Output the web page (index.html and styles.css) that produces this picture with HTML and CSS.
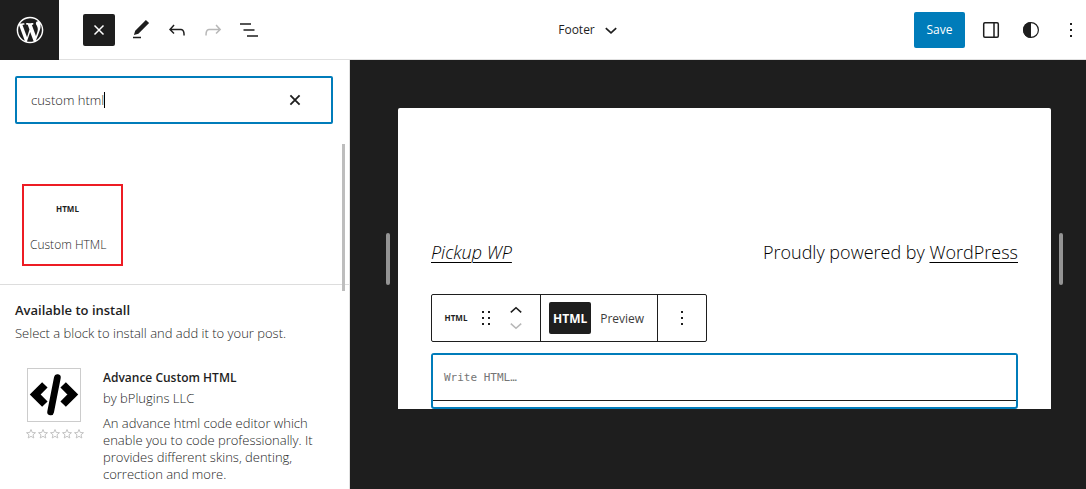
FILE: index.html
```html
<!DOCTYPE html>
<html lang="en">
<head>
<meta charset="UTF-8">
<meta name="viewport" content="width=device-width, initial-scale=1.0">
<title>Footer - Site Editor</title>
<link rel="stylesheet" href="styles.css">
</head>
<body>
    <!-- Top bar -->
    <header class="header">
        <a href="#" class="site-logo" aria-label="Go back to the dashboard">
            <svg width="32" height="32" viewBox="-2 -2 24 24" fill="currentColor"><path d="M20 10c0-5.51-4.49-10-10-10C4.48 0 0 4.49 0 10c0 5.52 4.48 10 10 10 5.51 0 10-4.48 10-10zM7.78 15.37L4.37 6.22c.55-.02 1.17-.08 1.17-.08.5-.06.44-1.13-.06-1.11 0 0-1.45.11-2.37.11-.18 0-.37 0-.58-.01C4.12 2.69 6.87 1.11 10 1.11c2.33 0 4.45.87 6.05 2.34-.68-.11-1.65.39-1.65 1.58 0 .74.45 1.36.9 2.1.35.61.55 1.36.55 2.46 0 1.49-1.4 5-1.4 5l-3.03-8.37c.54-.02.82-.17.82-.17.5-.05.44-1.25-.06-1.22 0 0-1.44.12-2.38.12-.87 0-2.33-.12-2.33-.12-.5-.03-.56 1.2-.06 1.22l.92.08 1.26 3.41zM17.41 10c.24-.64.74-1.87.43-4.25.7 1.29 1.05 2.71 1.05 4.25 0 3.29-1.73 6.24-4.4 7.78.97-2.59 1.94-5.2 2.92-7.78zM6.1 18.09C3.12 16.65 1.11 13.53 1.11 10c0-1.3.23-2.48.72-3.59C3.25 10.3 4.67 14.2 6.1 18.09zm4.03-6.63l2.58 6.98c-.86.29-1.76.45-2.71.45-.79 0-1.57-.11-2.29-.33.81-2.38 1.62-4.74 2.42-7.1z"/></svg>
        </a>
        <div class="header-tools">
            <button type="button" class="inserter-toggle" aria-label="Toggle block inserter">
                <svg width="24" height="24" viewBox="0 0 24 24" stroke="currentColor" stroke-width="1.5"><path d="M7.5 7.5l9 9M16.5 7.5l-9 9"/></svg>
            </button>
            <button type="button" class="icon-button" aria-label="Tools">
                <svg width="24" height="24" viewBox="0 0 24 24" fill="currentColor"><path d="M20.1 5.1L16.9 2 6.2 12.7l-1.3 4.4 4.5-1.3L20.1 5.1zM4 18.8h8v1.5H4v-1.5z"/></svg>
            </button>
            <button type="button" class="icon-button" aria-label="Undo">
                <svg width="24" height="24" viewBox="0 0 24 24" fill="currentColor"><path d="M18.3 11.7c-.6-.6-1.4-.9-2.3-.9H6.7l2.9-3.3-1.1-1-4.5 5L8.5 16l1-1-2.7-2.7H16c.5 0 .9.2 1.3.5 1 1 1 3.4 1 4.5v.3h1.5v-.2c0-1.5 0-4.3-1.5-5.7z"/></svg>
            </button>
            <button type="button" class="icon-button" aria-label="Redo" disabled>
                <svg width="24" height="24" viewBox="0 0 24 24" fill="currentColor"><path d="M15.6 6.5l-1.1 1 2.9 3.3H8c-.9 0-1.7.3-2.3.9-1.4 1.5-1.4 4.2-1.4 5.6v.2h1.5v-.3c0-1.1 0-3.5 1-4.5.3-.3.7-.5 1.3-.5h9.2L14.5 15l1.1 1.1 4.6-4.6-4.6-5z"/></svg>
            </button>
            <button type="button" class="icon-button" aria-label="List view">
                <svg width="24" height="24" viewBox="0 0 24 24" fill="currentColor"><path d="M3 5.2h11v1.6H3zM6.5 11.2h11v1.6h-11zM10 17.2h11v1.6H10z"/></svg>
            </button>
        </div>
        <button type="button" class="document-title">
            Footer
            <svg width="24" height="24" viewBox="0 0 24 24" fill="none" stroke="currentColor" stroke-width="1.7"><path d="M6.8 10.2l5.2 4.6 5.2-4.6"/></svg>
        </button>
        <div class="header-actions">
            <button type="button" class="save-button">Save</button>
            <button type="button" class="icon-button" aria-label="Settings">
                <svg width="24" height="24" viewBox="0 0 24 24" fill="none" stroke="currentColor" stroke-width="1.5"><rect x="4.7" y="4.7" width="14.6" height="14.6" rx="1.2"/><path d="M15 4.7v14.6"/></svg>
            </button>
            <button type="button" class="icon-button" aria-label="Styles">
                <svg width="24" height="24" viewBox="0 0 24 24"><circle cx="12" cy="12" r="7.4" fill="none" stroke="currentColor" stroke-width="1.2"/><path d="M12 4a8 8 0 0 0 0 16z" fill="currentColor"/></svg>
            </button>
            <button type="button" class="icon-button" aria-label="Options">
                <svg width="24" height="24" viewBox="0 0 24 24" fill="currentColor"><path d="M11 5h2v2h-2zM11 11h2v2h-2zM11 17h2v2h-2z"/></svg>
            </button>
        </div>
    </header>

    <main class="editor">
        <!-- Block inserter -->
        <aside class="inserter">
            <div class="search">
                <input type="text" id="blockSearch" class="search-input" aria-label="Search for blocks and patterns" value="custom html">
                <span class="caret"></span>
                <button type="button" class="search-reset" aria-label="Reset search">
                    <svg width="24" height="24" viewBox="0 0 24 24" stroke="currentColor" stroke-width="1.8"><path d="M7.4 7.4l9.2 9.2M16.6 7.4l-9.2 9.2"/></svg>
                </button>
            </div>
            <div class="results">
                <button type="button" class="block-item">
                    <span class="html-icon">HTML</span>
                    <span class="block-name">Custom HTML</span>
                </button>
                <div class="scrollbar"></div>
            </div>
            <section class="available">
                <h2>Available to install</h2>
                <p>Select a block to install and add it to your post.</p>
                <article class="plugin">
                    <div class="plugin-media">
                        <svg class="plugin-icon" width="54" height="54" viewBox="0 0 54 54" fill="none" stroke="#000" stroke-width="8"><path d="M17.500 16.500L7.500 26.500l10 10M36.500 16.500l10 10-10 10"/><path d="M30.500 9L23.500 44.500" stroke-width="7" stroke-linecap="round"/></svg>
                        <div class="stars" role="img" aria-label="0 out of 5 stars">
                            <svg viewBox="0 0 12 12"><path d="M6 1.500l1.300 3 3.200.2-2.500 2.100.8 3.200L6 8.300 3.200 10 4 6.800 1.500 4.700l3.200-.2z"/></svg>
                            <svg viewBox="0 0 12 12"><path d="M6 1.500l1.300 3 3.200.2-2.500 2.100.8 3.200L6 8.300 3.200 10 4 6.800 1.500 4.700l3.200-.2z"/></svg>
                            <svg viewBox="0 0 12 12"><path d="M6 1.500l1.300 3 3.200.2-2.500 2.100.8 3.200L6 8.300 3.200 10 4 6.800 1.500 4.700l3.200-.2z"/></svg>
                            <svg viewBox="0 0 12 12"><path d="M6 1.500l1.300 3 3.200.2-2.500 2.100.8 3.200L6 8.300 3.200 10 4 6.800 1.500 4.700l3.200-.2z"/></svg>
                            <svg viewBox="0 0 12 12"><path d="M6 1.500l1.300 3 3.200.2-2.500 2.100.8 3.200L6 8.300 3.200 10 4 6.800 1.500 4.700l3.200-.2z"/></svg>
                        </div>
                    </div>
                    <div class="plugin-info">
                        <h3>Advance Custom HTML</h3>
                        <p class="plugin-author">by bPlugins LLC</p>
                        <p class="plugin-text">An advance html code editor which enable you to code professionally. It provides different skins, denting, correction and more.</p>
                    </div>
                </article>
            </section>
        </aside>

        <!-- Canvas with the template part -->
        <section class="canvas">
            <div class="resize-handle"></div>
            <div class="frame">
                <div class="site-footer">
                    <a href="#" class="site-title">Pickup WP</a>
                    <p>Proudly powered by <a href="#">WordPress</a></p>
                </div>
                <div class="toolbar">
                    <div class="toolbar-group">
                        <button type="button" class="tool type-tool"><span class="html-icon">HTML</span></button>
                        <button type="button" class="tool drag-tool" aria-label="Drag">
                            <svg width="24" height="24" viewBox="0 0 24 24" fill="currentColor"><path d="M8 5h2v2H8zM14 5h2v2h-2zM8 11h2v2H8zM14 11h2v2h-2zM8 17h2v2H8zM14 17h2v2h-2z"/></svg>
                        </button>
                        <div class="movers">
                            <button type="button" class="tool" aria-label="Move up">
                                <svg width="24" height="16" viewBox="0 0 24 16" fill="none" stroke="currentColor" stroke-width="1.600"><path d="M6.800 10.300L12 5.700l5.200 4.600"/></svg>
                            </button>
                            <button type="button" class="tool" aria-label="Move down" disabled>
                                <svg width="24" height="16" viewBox="0 0 24 16" fill="none" stroke="currentColor" stroke-width="1.600"><path d="M6.800 5.700L12 10.300l5.200-4.600"/></svg>
                            </button>
                        </div>
                    </div>
                    <div class="toolbar-group">
                        <button type="button" class="tool tab active">HTML</button>
                        <button type="button" class="tool tab">Preview</button>
                    </div>
                    <div class="toolbar-group">
                        <button type="button" class="tool more-tool" aria-label="Options">
                            <svg width="24" height="24" viewBox="0 0 24 24" fill="currentColor"><path d="M11 5h2v2h-2zM11 11h2v2h-2zM11 17h2v2h-2z"/></svg>
                        </button>
                    </div>
                </div>
                <div class="html-block">
                    <textarea rows="1" aria-label="HTML" placeholder="Write HTML…"></textarea>
                </div>
            </div>
            <div class="resize-handle"></div>
        </section>
    </main>
</body>
</html>
```
FILE: styles.css
```css
* {
box-sizing: border-box;
}

body {
font-family: "Open Sans", "Noto Sans", sans-serif;
font-size: 13px;
font-weight: 300;
color: #1e1e1e;
background: #fff;
margin: 0;
height: 100vh;
display: flex;
flex-direction: column;
overflow: hidden;
}

h2, h3, p {
margin: 0;
}

button {
font: inherit;
color: inherit;
background: none;
border: none;
padding: 0;
display: flex;
align-items: center;
justify-content: center;
cursor: pointer;
}

button:disabled {
color: #b8b8b8;
}

svg {
display: block;
flex: none;
}

/* Top bar */
.header {
display: flex;
align-items: center;
justify-content: space-between;
height: 60px;
flex: none;
border-bottom: 1px solid #e0e0e0;
padding-right: 3px;
}

.site-logo {
width: 59px;
height: 60px;
flex: none;
display: flex;
align-items: center;
justify-content: center;
background: #1e1e1e;
color: #fff;
}

.header-tools {
display: flex;
align-items: center;
margin-left: 24px;
margin-right: auto;
}

.inserter-toggle {
width: 32px;
height: 32px;
margin-right: 8px;
background: #1e1e1e;
color: #fff;
border-radius: 2px;
}

.header-tools .icon-button {
width: 36px;
height: 36px;
}

.document-title {
font-size: 12px;
font-weight: 400;
gap: 4px;
}

.header-actions {
display: flex;
align-items: center;
gap: 16px;
margin-left: auto;
}

.header-actions .icon-button {
width: 24px;
height: 36px;
}

.save-button {
width: 51px;
height: 36px;
margin-right: -2px;
background: #007cba;
color: #fff;
font-size: 12px;
font-weight: 400;
border-radius: 2px;
}

.editor {
display: flex;
flex: 1;
min-height: 0;
}

/* Inserter panel */
.inserter {
width: 350px;
flex: none;
border-right: 1px solid #e0e0e0;
overflow: hidden;
}

.search {
display: flex;
align-items: center;
height: 48px;
margin: 16px 16px 20px 15px;
padding: 0 24px 0 14px;
border: 2px solid #007cba;
border-radius: 2px;
}

.search-input {
font: inherit;
color: #1e1e1e;
border: none;
outline: none;
padding: 0;
min-width: 0;
field-sizing: content;
}

.caret {
width: 1px;
height: 16px;
background: #000;
}

.search-reset {
margin-left: auto;
}

.results {
position: relative;
padding: 40px 22px 18px;
border-bottom: 1px solid #ddd;
}

.block-item {
flex-direction: column;
align-items: stretch;
width: 101px;
height: 82px;
border: 2px solid #ed1c24;
}

.html-icon {
font-size: 8px;
font-weight: 700;
line-height: 24px;
text-align: center;
}

.block-item .html-icon {
margin-right: 10px;
}

.block-name {
margin-top: 16px;
padding-left: 6px;
font-size: 12px;
line-height: 16px;
text-align: left;
}

.scrollbar {
position: absolute;
top: 0;
right: 4px;
width: 3px;
height: 147px;
background: #bdbdbd;
}

.available {
padding: 15px;
}

.available h2 {
font-size: 13px;
font-weight: 600;
line-height: 20px;
}

.available p {
line-height: 17px;
}

.available h2 + p {
margin-top: 5px;
}

.plugin {
display: flex;
gap: 18px;
margin-top: 26px;
padding-left: 10px;
}

.plugin-icon {
margin-left: 2px;
border: 1px solid #ccc;
}

.stars {
display: flex;
margin-top: 6px;
}

.stars svg {
width: 12px;
height: 12px;
fill: none;
stroke: #c4c4c4;
stroke-width: 1;
}

.plugin-info h3 {
font-size: 12px;
font-weight: 600;
line-height: 20px;
}

.plugin-info .plugin-author {
margin: 2px 0 8px;
}

/* Canvas */
.canvas {
display: flex;
align-items: flex-start;
gap: 8px;
flex: 1;
min-width: 0;
padding: 48px 23px 80px 36px;
background: #1e1e1e;
}

.resize-handle {
width: 4px;
height: 52px;
flex: none;
align-self: flex-start;
margin-top: 125px;
border-radius: 2px;
background: #949494;
}

.frame {
flex: 1;
min-width: 0;
padding: 128px 33px 0;
background: #fff;
border-radius: 2px 2px 0 0;
}

.site-footer {
display: flex;
justify-content: space-between;
font-size: 18px;
line-height: 32px;
color: #000;
}

.site-footer a {
color: inherit;
text-underline-offset: 3px;
text-decoration-thickness: 1px;
}

.site-title {
font-style: italic;
}

.toolbar {
display: inline-flex;
height: 48px;
margin-top: 26px;
border: 1px solid #1e1e1e;
border-radius: 2px;
}

.toolbar-group {
display: flex;
align-items: center;
}

.toolbar-group + .toolbar-group {
border-left: 1px solid #1e1e1e;
}

.type-tool {
width: 24px;
margin-left: 12px;
}

.drag-tool {
margin-left: 6px;
}

.movers {
margin: 0 12px 0 6px;
}

.tab {
height: 32px;
padding: 0 4px;
margin-left: 8px;
font-size: 12px;
font-weight: 400;
color: #3c3c3c;
}

.tab + .tab {
margin: 0 9px 0 5px;
}

.tab.active {
background: #1e1e1e;
color: #fff;
font-weight: 700;
border-radius: 2px;
}

.more-tool {
width: 48px;
height: 46px;
}

.html-block {
margin-top: 11px;
height: 56px;
border: 2px solid #007cba;
border-radius: 3px;
}

.html-block textarea {
display: block;
width: 100%;
height: 46px;
padding: 15px 11px;
border: none;
border-bottom: 1px solid #1e1e1e;
outline: none;
resize: none;
overflow: hidden;
font: 11px/16px "DejaVu Sans Mono", monospace;
}

.html-block textarea::placeholder {
color: #757575;
}
```
